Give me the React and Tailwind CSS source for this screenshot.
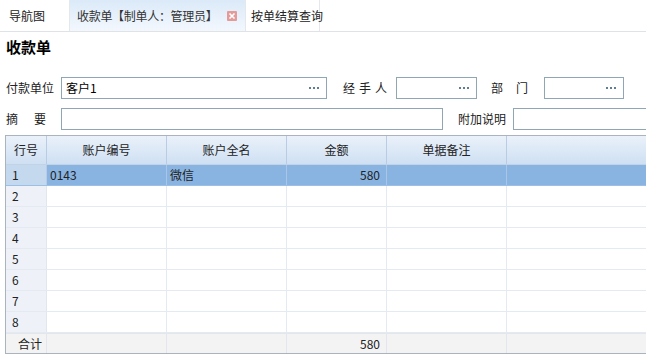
import React from "react";

const font = { fontFamily: '"Noto Sans CJK SC", "Noto Sans", sans-serif' };

const Dots = () => (
    <svg width="14" height="4" viewBox="0 0 14 4" className="mr-[4px] shrink-0">
        <rect x="1" y="1" width="2" height="2" fill="#5f7d95" />
        <rect x="5" y="1" width="2" height="2" fill="#5f7d95" />
        <rect x="9" y="1" width="2" height="2" fill="#5f7d95" />
    </svg>
);

const Field = ({ className, value, dots }) => (
    <div className={`h-[22px] shrink-0 border border-[#8fa6b4] bg-white flex items-center justify-between pl-1 ${className}`}>
        <span className="text-[12px] text-black whitespace-nowrap">{value}</span>
        {dots && <Dots />}
    </div>
);

const CloseIcon = () => (
    <svg width="10" height="10" viewBox="0 0 10 10" className="shrink-0">
        <rect x="0" y="0" width="10" height="10" rx="1" fill="#e59a9a" />
        <path d="M2.5 2.5 L7.5 7.5 M7.5 2.5 L2.5 7.5" stroke="#fff" strokeWidth="1.6" />
    </svg>
);

const cols = "grid grid-cols-[41px_120px_120px_100px_120px_1fr]";

const App = () => {
    const rows = [1, 2, 3, 4, 5, 6, 7, 8];
    return (
        <div className="w-[646px] h-[363px] bg-white overflow-hidden text-[12px] text-[#222] whitespace-nowrap" style={font}>
            {/* tabs */}
            <div className="h-[32px] flex border-b border-[#dfe3e8]">
                <div className="w-[70px] shrink-0 flex items-center pl-[9px] border-r border-[#e4e8ec]">导航图</div>
                <div className="w-[176px] shrink-0 flex items-center pl-[7px] gap-[10px] bg-gradient-to-b from-[#dbe9f8] to-[#f3f8fd] border-r border-[#e4e8ec] text-[#333]">
                    <span className="tracking-[-0.3px]">收款单【制单人：管理员】</span>
                    <CloseIcon />
                </div>
                <div className="w-[74px] shrink-0 flex items-center pl-[5px] border-r border-[#e4e8ec]">按单结算查询</div>
            </div>

            <div className="pl-[6px] pt-[5px] text-[15px] font-bold text-black leading-[20px]">收款单</div>

            {/* form row 1 */}
            <div className="flex items-center mt-[20px] h-[22px]">
                <span className="w-[61px] shrink-0 pl-[6px]">付款单位</span>
                <Field className="w-[266px]" value="客户1" dots />
                <span className="ml-[16px] w-[53px] shrink-0 tracking-[4px]">经手人</span>
                <Field className="w-[81px]" dots />
                <span className="ml-[14px] w-[53px] shrink-0 flex justify-between pr-[16px]"><span>部</span><span>门</span></span>
                <Field className="w-[80px]" dots />
            </div>

            {/* form row 2 */}
            <div className="flex items-center mt-[9px] h-[22px]">
                <span className="w-[61px] shrink-0 pl-[6px] pr-[15px] flex justify-between"><span>摘</span><span>要</span></span>
                <Field className="w-[382px]" />
                <span className="ml-[15px] w-[55px] shrink-0">附加说明</span>
                <Field className="w-[140px]" />
            </div>

            {/* table */}
            <div className="ml-[5px] mt-[5px] border-t border-l border-b border-[#a9b4bf]">
                <div className={`${cols} h-[29px] bg-gradient-to-b from-[#eaf1fa] to-[#cfe0f3] border-b border-[#c2d3e6]`}>
                    <div className="flex items-center justify-center border-r border-[#b8cde4]">行号</div>
                    <div className="flex items-center justify-center border-r border-[#b8cde4]">账户编号</div>
                    <div className="flex items-center justify-center border-r border-[#b8cde4]">账户全名</div>
                    <div className="flex items-center justify-center border-r border-[#b8cde4]">金额</div>
                    <div className="flex items-center justify-center border-r border-[#b8cde4]">单据备注</div>
                    <div />
                </div>
                {rows.map((n) => {
                    const sel = n === 1;
                    const cell = sel
                        ? "border-r border-[#a9c6e6] bg-[#89b4e2]"
                        : "border-r border-[#e3eaf2] bg-white";
                    return (
                        <div key={n} className={`${cols} h-[21px] border-b ${sel ? "border-[#9cbfe6]" : "border-[#e3eaf2]"}`}>
                            <div className={`flex items-center pl-[6px] border-r ${sel ? "bg-[#c4d8ee] border-[#b8cde4]" : "bg-[#eef2f8] border-[#e0e7ef]"}`}>{n}</div>
                            <div className={`flex items-center pl-[3px] ${cell}`}>{sel ? "0143" : ""}</div>
                            <div className={`flex items-center pl-[3px] ${cell}`}>{sel ? "微信" : ""}</div>
                            <div className={`flex items-center justify-end pr-[6px] ${cell}`}>{sel ? "580" : ""}</div>
                            <div className={cell} />
                            <div className={sel ? "bg-[#89b4e2]" : "bg-white"} />
                        </div>
                    );
                })}
                <div className={`${cols} h-[20px] bg-[#f3f3f3] border-t border-[#e3e6ea]`}>
                    <div className="flex items-center pl-[12px] border-r border-[#e3e6ea]">合计</div>
                    <div className="border-r border-[#e3e6ea]" />
                    <div className="border-r border-[#e3e6ea]" />
                    <div className="flex items-center justify-end pr-[6px] border-r border-[#e3e6ea]">580</div>
                    <div className="border-r border-[#e3e6ea]" />
                    <div />
                </div>
            </div>
        </div>
    );
};

export default App;
